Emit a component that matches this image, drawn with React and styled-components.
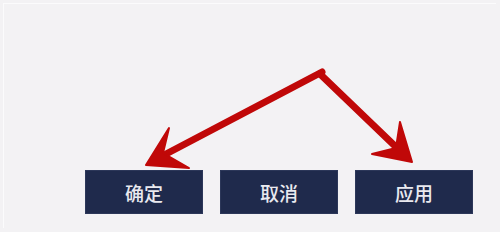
import React from 'react';
import styled, { createGlobalStyle } from 'styled-components';

const GlobalStyle = createGlobalStyle`
  html, body {
    margin: 0;
    padding: 0;
    background: #f3f2f4;
  }
  body {
    font-family: "Liberation Sans", "Noto Sans CJK SC", sans-serif;
  }
`;

const Frame = styled.div`
  position: relative;
  width: 500px;
  height: 232px;
  box-sizing: border-box;
  padding: 3px 4px 4px 3px;
  background: #f3f2f4;
  overflow: hidden;
`;

const Panel = styled.div`
  height: 100%;
  box-sizing: border-box;
  border-left: 1px solid #fbfbfc;
  border-top: 1px solid #fbfbfc;
  display: flex;
  flex-direction: column;
  justify-content: flex-end;
  padding: 0 0 14px 81px;
`;

const ButtonRow = styled.div`
  display: flex;
  gap: 17px;
`;

const Button = styled.button`
  width: 118px;
  height: 44px;
  border: 1px solid #2c3759;
  background: #1f2a4c;
  color: #e9e9ef;
  font-family: "Noto Sans CJK SC", sans-serif;
  font-size: 19px;
  font-weight: 500;
  padding: 0;
  cursor: pointer;
`;

const Arrows = styled.svg`
  position: absolute;
  left: 0;
  top: 0;
  pointer-events: none;
`;

export default function App() {
  return (
    <>
      <GlobalStyle />
      <Frame>
        <Panel>
          <ButtonRow>
            <Button>确定</Button>
            <Button>取消</Button>
            <Button>应用</Button>
          </ButtonRow>
        </Panel>
        <Arrows width="500" height="232" viewBox="0 0 500 232">
          <g fill="#c00808" stroke="#c00808" strokeLinejoin="round">
            <line x1="322" y1="72" x2="166" y2="154" strokeWidth="7" strokeLinecap="round" />
            <polygon points="146,165 169,128 163,153 189,168" strokeWidth="2" />
            <line x1="320" y1="74" x2="396" y2="147" strokeWidth="7" strokeLinecap="round" />
            <polygon points="412,162 400,122 396,148 372,154" strokeWidth="2" />
          </g>
        </Arrows>
      </Frame>
    </>
  );
}
